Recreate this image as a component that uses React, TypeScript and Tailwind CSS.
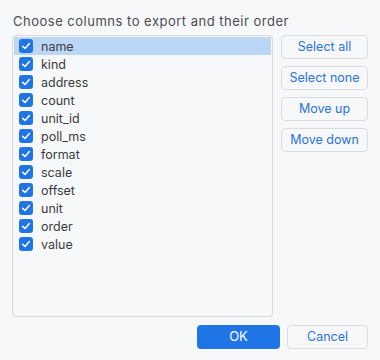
import { useState } from 'react';

const initialColumns = [
  'name',
  'kind',
  'address',
  'count',
  'unit_id',
  'poll_ms',
  'format',
  'scale',
  'offset',
  'unit',
  'order',
  'value',
];

const CheckBox = ({ checked }: { checked: boolean }) => (
  <span
    className={`flex h-[14px] w-[14px] shrink-0 items-center justify-center rounded-[3px] ${
      checked ? 'bg-[#1f74e6]' : 'border border-[#b5b9c0] bg-white'
    }`}
  >
    {checked && (
      <svg viewBox="0 0 14 14" className="h-[14px] w-[14px]">
        <path d="M3.6 7.2 L6 9.5 L10.4 4.6" fill="none" stroke="white" strokeWidth="1.5" strokeLinecap="round" strokeLinejoin="round" />
      </svg>
    )}
  </span>
);

const SideButton = ({ label, onClick }: { label: string; onClick: () => void }) => (
  <button
    onClick={onClick}
    className="h-[24px] w-full rounded-[4px] border border-[#d9dce1] bg-[#f7f8fa] text-[12.5px] text-[#2a72e0] hover:bg-white"
  >
    {label}
  </button>
);

const App = () => {
  const [columns, setColumns] = useState(initialColumns);
  const [checked, setChecked] = useState<Record<string, boolean>>(
    Object.fromEntries(initialColumns.map((c) => [c, true]))
  );
  const [selected, setSelected] = useState(0);

  const setAll = (value: boolean) => {
    setChecked(Object.fromEntries(columns.map((c) => [c, value])));
  };

  const move = (dir: number) => {
    const target = selected + dir;
    if (target < 0 || target >= columns.length) return;
    const next = [...columns];
    [next[selected], next[target]] = [next[target], next[selected]];
    setColumns(next);
    setSelected(target);
  };

  return (
    <div className="h-[360px] w-[380px] bg-[#f7f8fa] px-[12px] pt-[12px] font-['Inter',sans-serif] text-[13px]">
      <p className="ml-[1px] h-[23px] pt-[1px] leading-[17px] tracking-[0.5px] text-[#4b4d52]">
        Choose columns to export and their order
      </p>

      <div className="flex gap-[8px]">
        {/* column list */}
        <div className="h-[282px] w-[261px] rounded-[4px] border border-[#d5d8dd] bg-[#f7f8fa] p-[1px]">
          {columns.map((col, i) => (
            <div
              key={col}
              onClick={() => setSelected(i)}
              className={`flex h-[18px] items-center gap-[8px] pl-[5px] ${
                selected === i ? 'bg-[#bcd6f6]' : ''
              }`}
            >
              <span
                onClick={(e) => {
                  e.stopPropagation();
                  setChecked({ ...checked, [col]: !checked[col] });
                }}
              >
                <CheckBox checked={checked[col]} />
              </span>
              <span className="pt-[1px] text-[12.5px] leading-[18px] text-[#3a3c40]">{col}</span>
            </div>
          ))}
        </div>

        {/* actions */}
        <div className="flex w-[87px] flex-col gap-[7px]">
          <SideButton label="Select all" onClick={() => setAll(true)} />
          <SideButton label="Select none" onClick={() => setAll(false)} />
          <SideButton label="Move up" onClick={() => move(-1)} />
          <SideButton label="Move down" onClick={() => move(1)} />
        </div>
      </div>

      <div className="mt-[8px] flex justify-end gap-[7px]">
        <button className="h-[24px] w-[83px] rounded-[4px] bg-[#1f74e6] text-[13px] text-white">OK</button>
        <button className="h-[24px] w-[81px] rounded-[4px] border border-[#d9dce1] bg-[#f7f8fa] text-[12.5px] text-[#2a72e0]">
          Cancel
        </button>
      </div>
    </div>
  );
};

export default App;
